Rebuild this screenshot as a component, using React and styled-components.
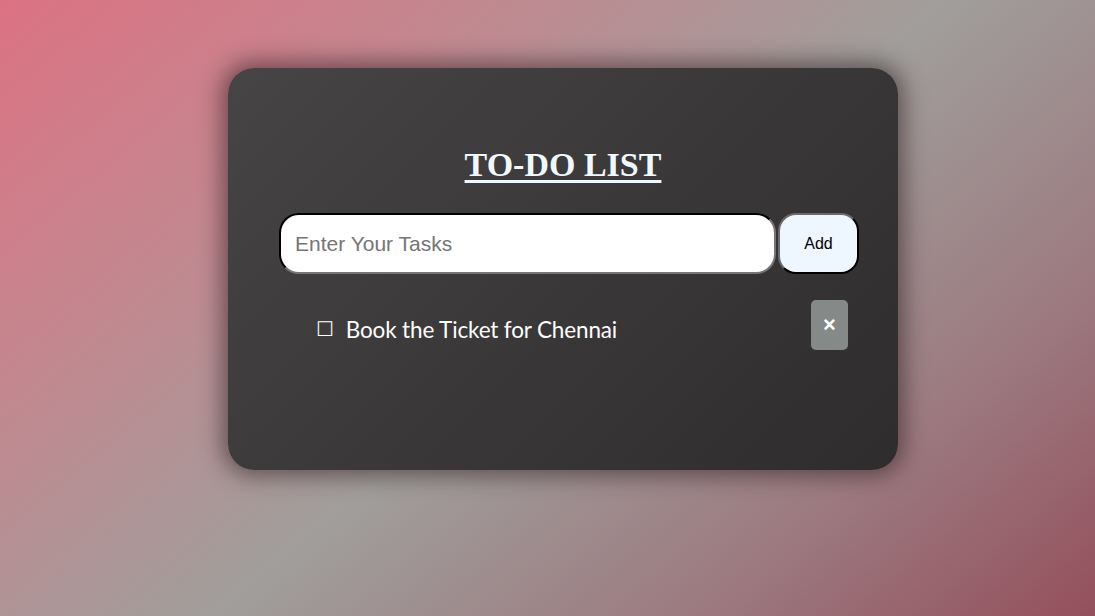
import React, { useState } from "react";
import styled, { createGlobalStyle } from "styled-components";

const GlobalStyle = createGlobalStyle`
  html, body {
    margin: 0;
    padding: 0;
    height: 100%;
  }
  body {
    background: linear-gradient(140deg, #dc7283 0%, #c4878f 25%, #a09e9b 52%, #9c7a80 78%, #94505c 100%);
    font-family: "Liberation Serif", serif;
  }
  #root {
    min-height: 100vh;
  }
`;

const Page = styled.div`
  min-height: 100vh;
  padding-top: 68px;
  box-sizing: border-box;
`;

const Card = styled.div`
  width: 670px;
  height: 402px;
  margin-left: 228px;
  box-sizing: border-box;
  padding: 78px 39px 0 51px;
  border-radius: 26px;
  background: linear-gradient(135deg, #464445 0%, #3a3839 50%, #2e2c2d 100%);
  box-shadow: 0 0 22px 6px rgba(40, 25, 30, 0.55);
`;

const Title = styled.h1`
  margin: 0 12px 29px 0;
  text-align: center;
  font-family: "Liberation Serif", serif;
  font-size: 34px;
  font-weight: 700;
  color: #f0f8ff;
  text-decoration: underline;
  text-decoration-thickness: 3px;
  text-underline-offset: 4px;
`;

const Form = styled.form`
  display: flex;
  gap: 2px;
  height: 61px;
`;

const TaskInput = styled.input`
  flex: 1;
  box-sizing: border-box;
  border: 2px inset #767676;
  border-top-color: #1a1a1a;
  border-left-color: #1a1a1a;
  border-radius: 20px;
  padding: 0 14px;
  font-family: "Liberation Sans", Arial, sans-serif;
  font-size: 21px;
  background: #fff;
  outline: none;
  &::placeholder {
    color: #757575;
  }
`;

const AddButton = styled.button`
  width: 81px;
  box-sizing: border-box;
  border: 2px outset #000;
  border-top-color: #6a6a6a;
  border-left-color: #6a6a6a;
  border-radius: 18px;
  background: #eef6ff;
  font-family: "Liberation Sans", Arial, sans-serif;
  font-size: 16px;
  color: #000;
  cursor: pointer;
`;

const List = styled.ul`
  list-style: none;
  margin: 26px 11px 0 0;
  padding: 0 0 0 37px;
`;

const Item = styled.li`
  display: flex;
  align-items: center;
  justify-content: space-between;
  color: #fff;
`;

const Label = styled.span`
  display: flex;
  align-items: center;
  gap: 12px;
  padding-top: 8px;
  font-family: "Lato", "Open Sans", sans-serif;
  font-size: 22.5px;
  letter-spacing: -0.15px;
`;

const Box = styled.span`
  font-family: "DejaVu Sans", sans-serif;
  font-size: 20px;
  line-height: 1;
`;

const RemoveButton = styled.button`
  width: 37px;
  height: 50px;
  border: none;
  border-radius: 5px;
  background: #858988;
  color: #fff;
  font-family: "Liberation Sans", Arial, sans-serif;
  font-size: 22px;
  font-weight: 700;
  padding: 0;
  cursor: pointer;
`;

export default function App() {
  const [tasks, setTasks] = useState(["Book the Ticket for Chennai"]);
  const [text, setText] = useState("");

  const add = e => {
    e.preventDefault();
    if (!text.trim()) return;
    setTasks([...tasks, text.trim()]);
    setText("");
  };

  return (
    <>
      <GlobalStyle />
      <Page>
        <Card>
          <Title>TO-DO LIST</Title>
          <Form onSubmit={add}>
            <TaskInput
              placeholder="Enter Your Tasks"
              value={text}
              onChange={e => setText(e.target.value)}
            />
            <AddButton type="submit">Add</AddButton>
          </Form>
          <List>
            {tasks.map((t, i) => (
              <Item key={i}>
                <Label>
                  <Box>☐</Box>
                  {t}
                </Label>
                <RemoveButton onClick={() => setTasks(tasks.filter((_, j) => j !== i))}>
                  ×
                </RemoveButton>
              </Item>
            ))}
          </List>
        </Card>
      </Page>
    </>
  );
}
